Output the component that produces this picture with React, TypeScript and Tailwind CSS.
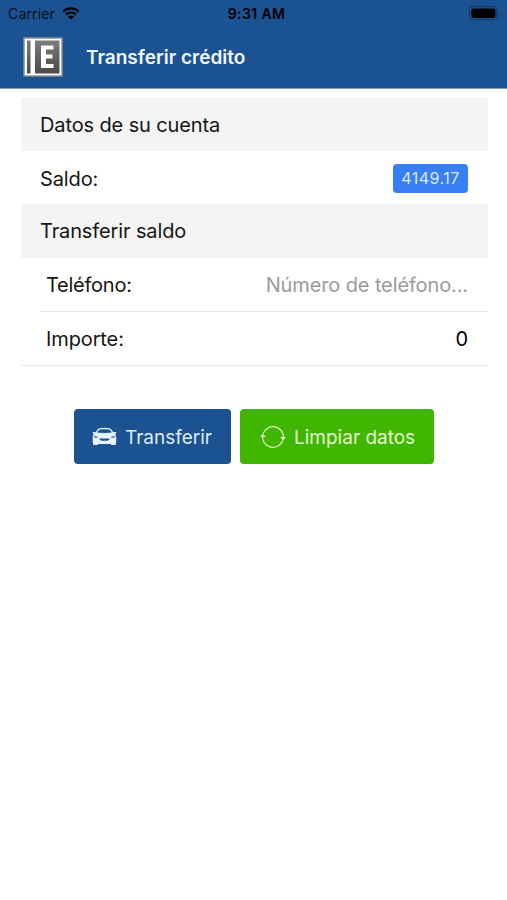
import type { ReactNode } from 'react';

function StatusBar() {
  return (
    <div className="grid h-[27px] grid-cols-3 items-center pl-2 pr-[7px] text-[14px] text-[#06101f]">
      <div className="flex items-center gap-[7px]">
        <span className="tracking-[0.15px]">Carrier</span>
        <svg width="18" height="13" viewBox="0 0 18 13" fill="none" stroke="#000" strokeWidth="2.3">
          <path d="M1.2 4.6C5.6 .4 12.4 .4 16.8 4.6" />
          <path d="M4 7.6c2.9-2.6 7.1-2.6 10 0" />
          <path d="M9 12.6 6 9.7c1.7-1.5 4.3-1.5 6 0z" fill="#000" stroke="none" />
        </svg>
      </div>
      <span className="pl-[5px] text-center font-semibold tracking-[0.4px] text-black">9:31 AM</span>
      <svg className="justify-self-end" width="32" height="15" viewBox="0 0 32 15">
        <rect x="1.6" y=".6" width="27" height="13.2" rx="3.6" fill="none" stroke="#123a69" strokeWidth="1.1" />
        <rect x="3.4" y="2.5" width="24" height="9.4" rx="2" fill="#000" />
        <path d="M30 5v4.4c1.6-.7 1.6-3.7 0-4.4z" fill="#123a69" />
      </svg>
    </div>
  );
}

function Logo() {
  return (
    <svg width="40" height="40" viewBox="0 0 40 40">
      <defs>
        <linearGradient id="cover" x1="0" y1="0" x2="0" y2="1">
          <stop offset="0" stopColor="#7d7b7c" />
          <stop offset="1" stopColor="#4b4a4b" />
        </linearGradient>
      </defs>
      <rect x="1" y="1" width="38" height="38" fill="#fff" stroke="#8d8f93" strokeWidth="1.5" />
      <rect x="4" y="3.5" width="3.5" height="33" fill="url(#cover)" />
      <rect x="12" y="3.5" width="24.500" height="33" fill="url(#cover)" />
      <path d="M18 8.500h12.500v4h-7.500v5h6.500v4h-6.500v5.500h7.500v4h-12.500z" fill="#fff" />
    </svg>
  );
}

function CarIcon() {
  return (
    <svg width="25" height="20" viewBox="0 0 25 20" fill="#e8f2fc">
      <path d="M3.800 6.700C5.200 3.200 6.200 2.100 8 1.800c3-.4 6-.4 9 0 1.800.3 2.800 1.400 4.200 4.900" fill="none" stroke="#e8f2fc" strokeWidth="1.300" />
      <path d="M.5 5.500c.4-.7 2-.8 2.900-.2 5.500.9 12.700.9 18.200 0 .9-.6 2.500-.5 2.900.2.200.7-.6 1.200-1.500 1.300 1 1.200 1.300 2.800 1.300 4.900 0 2.400-.2 4.300-.5 5.500-.2.700-.5.900-1.200.9h-2.700c-.7 0-1-.4-1-1H6.100c0 .6-.3 1-1 1H2.400c-.7 0-1-.2-1.200-.9C.9 16 .7 14.100.7 11.700c0-2.100.3-3.700 1.300-4.900C1.100 6.700.3 6.200.5 5.500z" />
      <path d="M2.300 8.900c2.100 0 3.400.6 4 1.700-1.600.4-3.200.2-4.200-.3z" fill="#4575ab" />
      <path d="M22.700 8.900c-2.100 0-3.400.6-4 1.700 1.600.4 3.200.2 4.200-.3z" fill="#4575ab" />
      <path d="M8.500 11.500h8c1 0 1.400.6.900 1.100-.7.700-1.300 1.100-2 1.100H9.600c-.7 0-1.300-.4-2-1.100-.5-.5-.1-1.100.9-1.100z" fill="#1b5292" />
    </svg>
  );
}

function SyncIcon() {
  return (
    <svg width="26" height="24" viewBox="0 0 26 24" fill="none" stroke="#d9f5c4" strokeWidth="1.2">
      <path d="M3.200 8.500A10.500 10.500 0 0 1 23.500 13" />
      <path d="M22.800 15.500A10.500 10.500 0 0 1 2.500 11" />
      <path d="M20 12l3.300 3.500 2.700-3.500z" fill="#d9f5c4" stroke="none" />
      <path d="M0 12l2.700-3.600 3.200 3.600z" fill="#d9f5c4" stroke="none" />
    </svg>
  );
}

function Divider({ children }: { children: ReactNode }) {
  return (
    <div className="flex h-[53.500px] items-center bg-[#f4f4f4] px-[19px] pt-px">
      {children}
    </div>
  );
}

export default function App() {
  return (
    <div className="min-h-screen bg-white font-['Inter',sans-serif] text-[20px] tracking-[-0.12px] text-[#151515]">
      <header className="h-[89px] border-b border-[#7f9bbf] bg-[#1b5292]">
        <StatusBar />
        <div className="flex h-[60px] items-center gap-[23px] pl-[23px]">
          <Logo />
          <h1 className="pt-[3px] text-[19px] font-semibold tracking-normal text-[#f1f6fc]">Transferir crédito</h1>
        </div>
      </header>

      <main className="pl-[21px] pr-[19px] pt-[8.500px]">
        <Divider>Datos de su cuenta</Divider>
        <div className="flex h-[53px] items-center justify-between pl-[19px] pr-5 pt-px">
          <span className="pt-px">Saldo:</span>
          <span className="flex h-[29px] w-[75px] items-center justify-center rounded-[4px] bg-[#387ef5] text-[16px] tracking-[0.5px] text-[#dfeafd]">
            4149.17
          </span>
        </div>
        <Divider>Transferir saldo</Divider>

        <div className="ml-[19px] flex h-[54px] items-center justify-between border-b border-[#e9e9e9] pl-[6px] pr-5 pt-0.5">
          <span className="tracking-[-0.25px]">Teléfono:</span>
          <span className="text-[#9b9b9b]">Número de teléfono...</span>
        </div>
        <div className="flex h-[54px] items-center justify-between border-b border-[#e9e9e9] pl-[25px] pr-5 pt-0.5">
          <span>Importe:</span>
          <span className="text-black">0</span>
        </div>

        <div className="mt-[43.500px] flex gap-[9px] pl-[53px] text-[19px] tracking-normal">
          <button className="flex h-[55px] w-[157px] items-center gap-2 rounded-[4px] bg-[#1b5292] pl-[18px] text-[#dfecfa]">
            <CarIcon />
            <span className="pt-1">Transferir</span>
          </button>
          <button className="flex h-[55px] w-[194px] items-center gap-2 rounded-[4px] bg-[#41b601] pl-[20px] text-[#e2f9d2]">
            <SyncIcon />
            <span className="pt-1">Limpiar datos</span>
          </button>
        </div>
      </main>
    </div>
  );
}
